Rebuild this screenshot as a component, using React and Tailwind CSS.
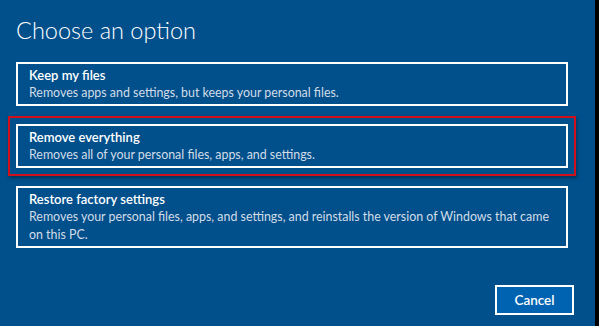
const OPTIONS = [
  { title: 'Keep my files', desc: 'Removes apps and settings, but keeps your personal files.' },
  { title: 'Remove everything', desc: 'Removes all of your personal files, apps, and settings.', selected: true },
  {
    title: 'Restore factory settings',
    desc: 'Removes your personal files, apps, and settings, and reinstalls the version of Windows that came',
    desc2: 'on this PC.',
  },
]

function Option({ item }) {
  return (
    <div className="relative w-[552px]">
      {item.selected && (
        <div className="absolute -inset-2 border-2 border-[#d0101a] shadow-[1px_2px_3px_rgba(0,0,0,0.35)]" />
      )}
      <button className="block w-full text-left border-2 border-white px-[11px] pt-[2px] pb-[2px] text-white">
        <div className="text-[13px] leading-[18px] font-semibold">{item.title}</div>
        <div className="text-[12.4px] leading-[18px] text-[#d3dde8]">
          {item.desc}
          {item.desc2 && <br />}
          {item.desc2}
        </div>
      </button>
    </div>
  )
}

export default function App() {
  return (
    <div className="flex w-[599px] h-[326px] bg-black font-['Segoe_UI','Lato','Noto_Sans',sans-serif]">
      <div className="flex flex-col w-[595px] h-full bg-[#014f8b] pl-4">
        <h1 className="mt-[14px] text-[23.5px] leading-[32px] font-light text-white">Choose an option</h1>

        <div className="flex flex-col gap-[18px] mt-[16px]">
          {OPTIONS.map(o => <Option key={o.title} item={o} />)}
        </div>

        <div className="flex justify-end mt-auto mb-[11px] pr-[21px]">
          <button className="w-[79px] h-[30px] border-2 border-white bg-[#0063b1] text-white text-[13.5px] font-semibold">
            Cancel
          </button>
        </div>
      </div>
    </div>
  )
}
